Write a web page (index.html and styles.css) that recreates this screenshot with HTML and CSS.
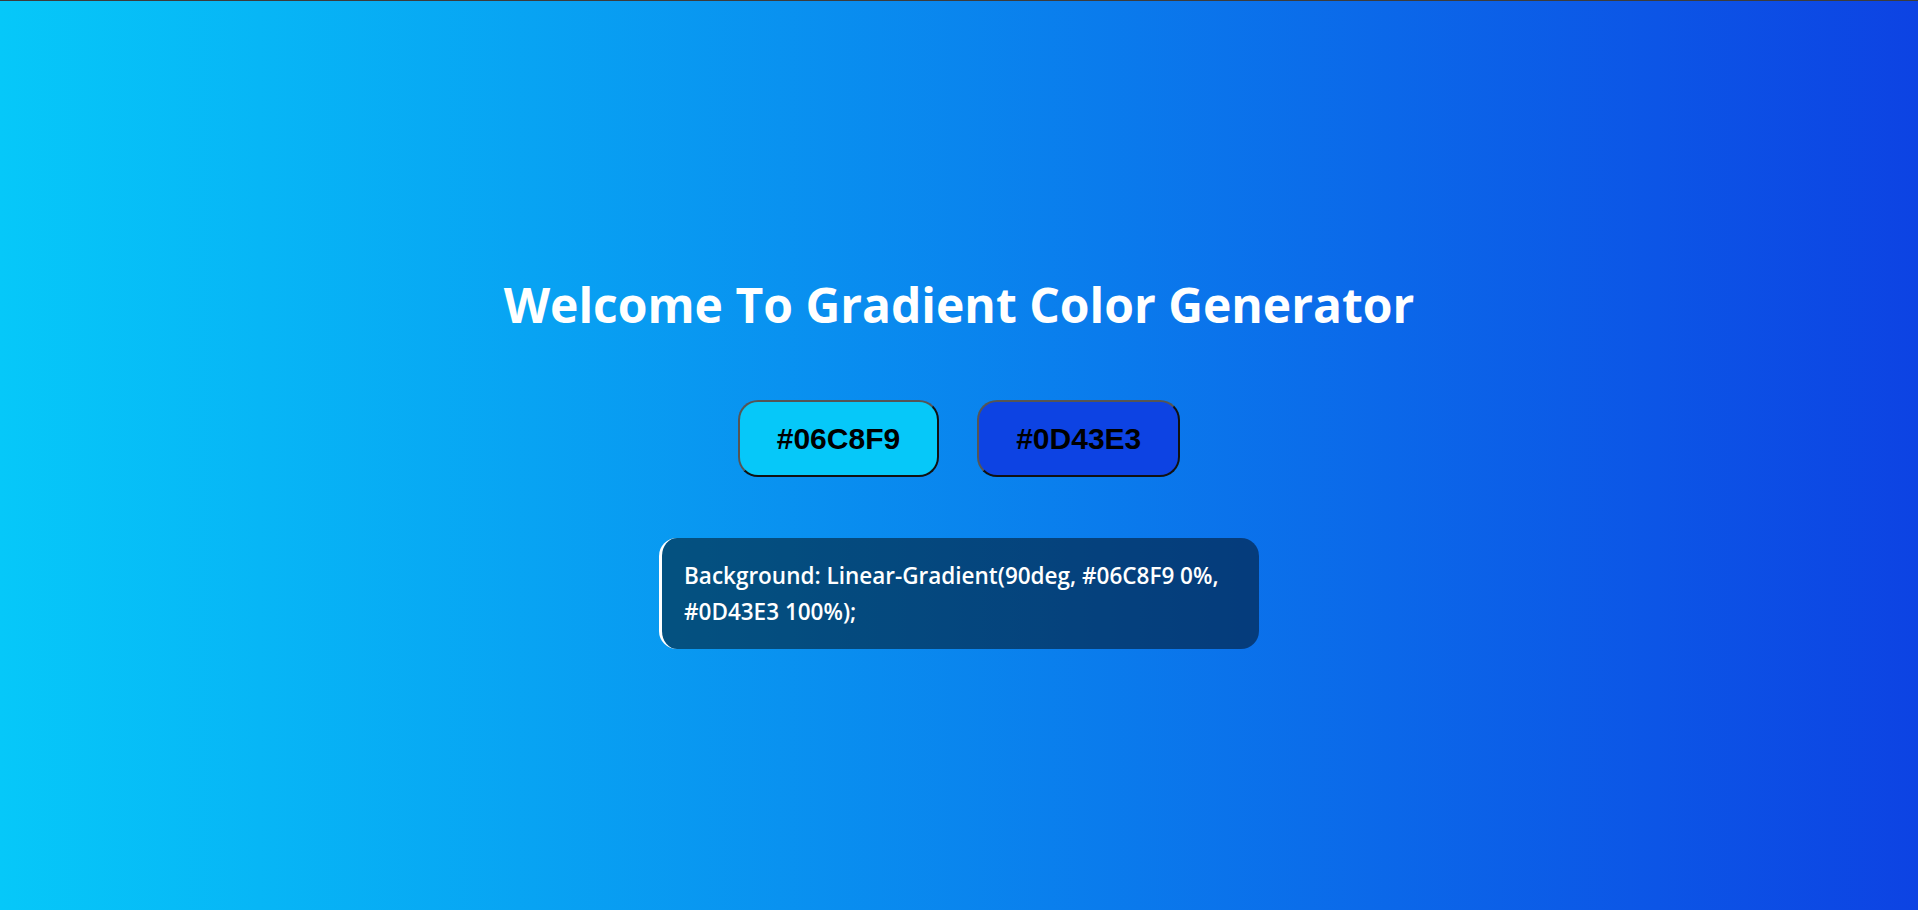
FILE: index.html
```html
<!DOCTYPE html>
<html lang="en">
<head>
<meta charset="utf-8">
<title>Gradient Color Generator</title>
<link rel="stylesheet" href="styles.css">
</head>
<body>
<main class="page">
  <h1 class="title">Welcome To Gradient Color Generator</h1>
  <div class="pickers">
    <button class="picker picker-a">#06C8F9</button>
    <button class="picker picker-b">#0D43E3</button>
  </div>
  <p class="code">Background: Linear-Gradient(90deg, #06C8F9 0%, #0D43E3 100%);</p>
</main>
</body>
</html>
```
FILE: styles.css
```css
html, body {
  margin: 0;
  padding: 0;
  height: 100%;
}
body {
  background: linear-gradient(90deg, #06C8F9 0%, #0D43E3 100%);
  border-top: 1px solid #3c3c3c;
  box-sizing: border-box;
  overflow: hidden;
}
.page {
  display: flex;
  flex-direction: column;
  align-items: center;
  padding-top: 274px;
}
.title {
  margin: 0;
  font-family: "Open Sans", "Lato", sans-serif;
  font-weight: 700;
  font-size: 48px;
  line-height: 60px;
  color: #fff;
}
.pickers {
  display: flex;
  gap: 38px;
  margin-top: 65px;
}
.picker {
  height: 77px;
  padding: 0 37px;
  font-family: "Liberation Sans", Arial, sans-serif;
  font-weight: 700;
  font-size: 30px;
  color: #000;
  border: 2px solid;
  border-color: #555 #111 #111 #555;
  border-radius: 20px;
}
.picker-a { background: #06C8F9; }
.picker-b { background: #0D43E3; }
.code {
  box-sizing: border-box;
  width: 600px;
  margin: 61px 0 0;
  padding: 20px 8px 19px 22px;
  border-left: 3px solid #fff;
  border-radius: 18px;
  background: rgba(0, 0, 0, 0.47);
  font-family: "Open Sans", "Lato", sans-serif;
  font-weight: 600;
  font-size: 22.5px;
  line-height: 36px;
  color: #fff;
}
```
